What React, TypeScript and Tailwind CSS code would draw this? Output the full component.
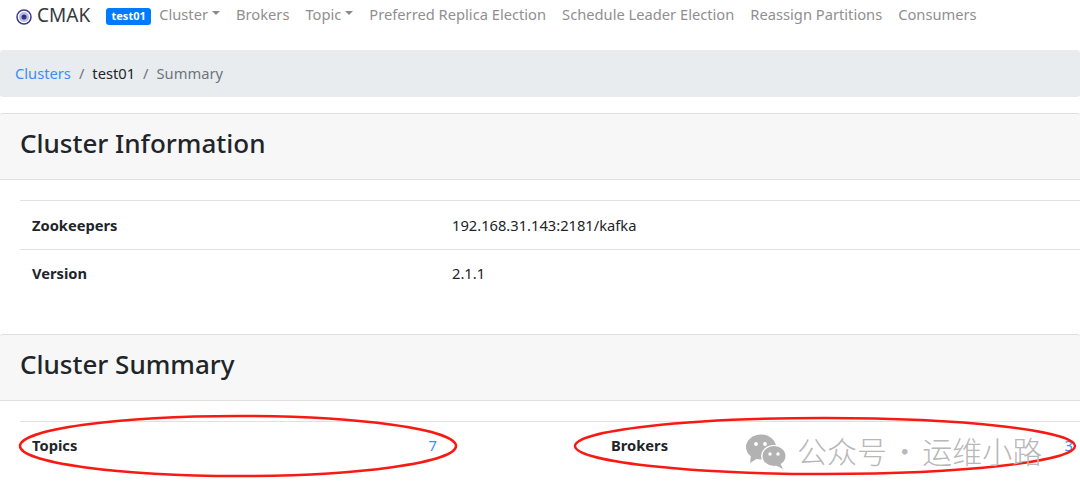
const NAV = [
  { label: 'Cluster', caret: true },
  { label: 'Brokers' },
  { label: 'Topic', caret: true },
  { label: 'Preferred Replica Election' },
  { label: 'Schedule Leader Election' },
  { label: 'Reassign Partitions' },
  { label: 'Consumers' },
];

function Caret() {
  return <span className="ml-[4px] mb-[2px] inline-block border-x-[4px] border-t-[4px] border-x-transparent border-t-[#8a8a8a]" />;
}

function Logo() {
  return (
    <svg width="16" height="16" viewBox="0 0 16 16" className="mt-[6px]">
      <circle cx="8" cy="8" r="7" fill="#fff" stroke="#3a3a8c" strokeWidth="1.5" />
      <circle cx="8" cy="8" r="5" fill="#b9b9e0" />
      <circle cx="8" cy="8" r="2.5" fill="#2f2f86" />
    </svg>
  );
}

function CardHeader({ title }: { title: string }) {
  return (
    <div className="flex h-[67px] items-center rounded-t-[3px] border-y border-[#e0e0e0] bg-[#f7f7f7] pb-[7px] pl-[20px]">
      <h2 className="text-[26px] font-medium leading-none text-[#212529]">{title}</h2>
    </div>
  );
}

function WeChat() {
  return (
    <svg width="44" height="36" viewBox="0 0 44 36" fill="#b2b2b2">
      <ellipse cx="16" cy="13" rx="15" ry="12.5" />
      <path d="M6 21 L5 29 L13 24 Z" />
      <ellipse cx="29" cy="22" rx="13" ry="11" fill="#fff" />
      <ellipse cx="29" cy="22" rx="11.5" ry="10" />
      <path d="M35 29 L38 35 L30 31 Z" />
      <circle cx="11" cy="10" r="1.9" fill="#fff" />
      <circle cx="20" cy="10" r="1.9" fill="#fff" />
      <circle cx="25" cy="20" r="1.7" fill="#fff" />
      <circle cx="33" cy="20" r="1.7" fill="#fff" />
    </svg>
  );
}

export default function App() {
  return (
    <div className="relative h-[497px] w-[1080px] overflow-hidden bg-white font-['Noto_Sans','Open_Sans',sans-serif] text-[#212529]">
      <nav className="flex h-[50px] items-start pt-[3px] pl-[16px]">
        <a className="flex items-start text-[19px] leading-[24px] text-[#343a40]">
          <Logo />
          <span className="ml-[5px]">CMAK</span>
        </a>
        <span className="mt-[5px] ml-[16px] flex h-[17px] w-[45px] items-center justify-center rounded-[3px] bg-[#007bff] text-[11px] font-bold text-white">
          test01
        </span>
        <div className="ml-[8px] flex gap-[16px] text-[14.7px] leading-[22px] text-[#8f8f8f]">
          {NAV.map((n) => (
            <span key={n.label} className="flex items-center whitespace-nowrap">
              {n.label}
              {n.caret && <Caret />}
            </span>
          ))}
        </div>
      </nav>

      <div className="flex h-[47px] items-center gap-[8px] rounded-[3px] bg-[#e9ecef] pl-[15px] text-[14.7px]">
        <span className="text-[#3d8bfd]">Clusters</span>
        <span className="text-[#6c757d]">/</span>
        <span>test01</span>
        <span className="text-[#6c757d]">/</span>
        <span className="text-[#6c757d]">Summary</span>
      </div>

      <section className="mt-[16px]">
        <CardHeader title="Cluster Information" />
        <div className="h-[154px] pl-[20px] pt-[20px] text-[14.7px]">
          <div className="flex h-[49px] items-center border-t border-[#dee2e6] pl-[12px]">
            <b className="w-[420px] font-bold">Zookeepers</b>
            <span>192.168.31.143:2181/kafka</span>
          </div>
          <div className="flex h-[49px] items-center border-t border-[#dee2e6] pb-[1px] pl-[12px]">
            <b className="w-[420px] font-bold">Version</b>
            <span>2.1.1</span>
          </div>
        </div>
      </section>

      <section>
        <CardHeader title="Cluster Summary" />
        <div className="flex pl-[20px] pt-[20px] text-[14.7px]">
          <div className="flex h-[49px] w-full items-center border-t border-[#dee2e6] pb-[2px]">
            <div className="flex w-[417px] justify-between pl-[12px]">
              <b className="font-bold">Topics</b>
              <span className="text-[#3d8bfd]">7</span>
            </div>
            <div className="ml-[174px] flex w-[462px] justify-between">
              <b className="font-bold">Brokers</b>
              <span className="text-[#3d8bfd]">3</span>
            </div>
          </div>
        </div>
      </section>

      <svg className="absolute left-0 top-[400px]" width="1080" height="97" viewBox="0 0 1080 97" fill="none" stroke="#f81a12" strokeWidth="2.5">
        <ellipse cx="238" cy="46" rx="218" ry="30" />
        <ellipse cx="825" cy="46" rx="250" ry="28" />
      </svg>

      <div className="absolute left-[745px] top-[433px] flex items-center gap-[8px]">
        <WeChat />
        <span className="-mt-[3px] font-['Noto_Sans_CJK_SC',sans-serif] text-[30px] leading-[40px] font-light whitespace-nowrap text-[#b8b8b8] [word-spacing:-4px]">公众号 · 运维小路</span>
      </div>
    </div>
  );
}
